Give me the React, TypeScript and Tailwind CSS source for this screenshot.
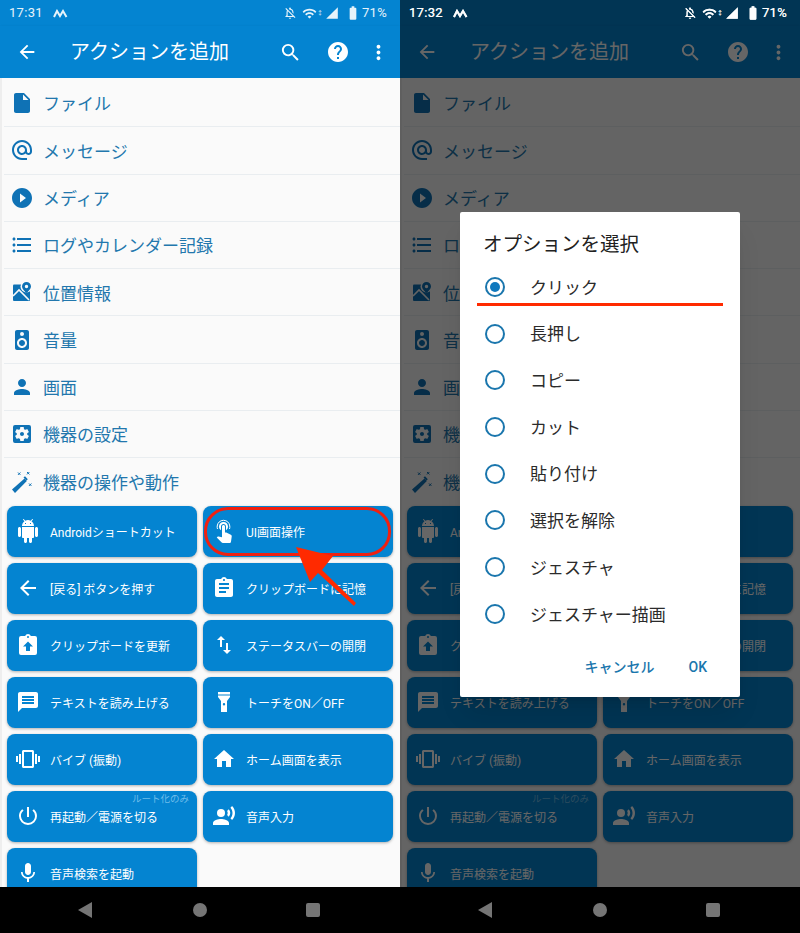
import type { ReactNode } from "react";
import {
  MdAlternateEmail,
  MdArrowBack,
  MdAssignment,
  MdBatteryFull,
  MdFormatListBulleted,
  MdHelp,
  MdHome,
  MdInsertDriveFile,
  MdMessage,
  MdMic,
  MdMoreVert,
  MdOutlineNotificationsOff,
  MdPerson,
  MdPlayCircleFilled,
  MdPowerSettingsNew,
  MdRecordVoiceOver,
  MdSearch,
  MdSettingsApplications,
  MdSignalCellular4Bar,
  MdSpeaker,
  MdSwapVert,
  MdVibration,
  MdWifi,
} from "react-icons/md";

const font = "font-['Roboto','Noto_Sans_CJK_JP',sans-serif]";

function MapPinIcon({ size = 24 }: { size?: number }) {
  return (
    <svg width={size} height={size} viewBox="0 0 24 24" fill="currentColor">
      <rect x="3" y="4.500" width="17" height="16.500" rx="1" />
      <path d="M3 16l6-6 10 10" fill="none" stroke="#fafafa" strokeWidth="1.600" />
      <circle cx="16.500" cy="6.500" r="6" fill="#fafafa" />
      <path d="M16.500 2a4.500 4.500 0 0 0-4.500 4.500c0 2.800 4.500 6.500 4.500 6.500s4.500-3.700 4.500-6.500A4.500 4.500 0 0 0 16.500 2zm0 6.200a1.700 1.700 0 1 1 0-3.400 1.700 1.700 0 0 1 0 3.400z" />
    </svg>
  );
}

function WandIcon({ size = 24 }: { size?: number }) {
  return (
    <svg width={size} height={size} viewBox="0 0 24 24" fill="currentColor">
      <path d="M2 19.500 14.500 8.500l2.300 2.500L5 23z" />
      <path d="M13.500 7.500l1.500-1.300 2.800 3-1.400 1.300z" />
      <g stroke="currentColor" strokeWidth="1" fill="none">
        <path d="M8 2.500l2.400 2.400M10.400 2.500 8 4.900" />
        <path d="M17 2l2.400 2.400M19.400 2 17 4.400" />
        <path d="M19 13.500l2.400 2.400M21.400 13.500 19 15.900" />
      </g>
    </svg>
  );
}

function ClipboardUpIcon({ size = 24 }: { size?: number }) {
  return (
    <svg width={size} height={size} viewBox="0 0 24 24" fill="currentColor">
      <path d="M19 3h-4.200C14.400 1.800 13.300 1 12 1s-2.400.8-2.800 2H5a2 2 0 0 0-2 2v15a2 2 0 0 0 2 2h14a2 2 0 0 0 2-2V5a2 2 0 0 0-2-2zm-7 0a1 1 0 1 1 0 2 1 1 0 0 1 0-2zm0 5.500 5 5h-3V18h-4v-4.500H7z" />
    </svg>
  );
}

function AndroidIcon({ size = 24 }: { size?: number }) {
  return (
    <svg width={size} height={size} viewBox="0 0 24 24" fill="currentColor">
      <path d="M6 18c0 .55.45 1 1 1h1v3.500c0 .83.67 1.500 1.500 1.500s1.500-.67 1.500-1.500V19h2v3.500c0 .83.67 1.500 1.500 1.500s1.500-.67 1.500-1.500V19h1c.55 0 1-.45 1-1V8H6v10zM3.500 8C2.670 8 2 8.670 2 9.500v7c0 .83.67 1.500 1.500 1.500S5 17.330 5 16.500v-7C5 8.670 4.330 8 3.500 8zm17 0c-.83 0-1.500.67-1.500 1.500v7c0 .83.67 1.500 1.500 1.500s1.500-.67 1.500-1.500v-7c0-.83-.67-1.500-1.500-1.500zm-4.970-5.840l1.300-1.300c.2-.2.2-.51 0-.71-.2-.2-.51-.2-.71 0l-1.480 1.480C13.850 1.230 12.950 1 12 1c-.96 0-1.860.23-2.660.63L7.850.15c-.2-.2-.51-.2-.71 0-.2.2-.2.51 0 .71l1.310 1.310C6.970 3.260 6 5.010 6 7h12c0-1.990-.97-3.750-2.470-4.840zM10 5H9V4h1v1zm5 0h-1V4h1v1z" />
    </svg>
  );
}

function TouchRingsIcon({ size = 24 }: { size?: number }) {
  return (
    <svg width={size} height={size} viewBox="0 0 24 24" fill="currentColor">
      <path d="M9 11.240V7.500C9 6.120 10.120 5 11.500 5S14 6.120 14 7.500v3.740c1.210-.81 2-2.180 2-3.740C16 5.010 13.990 3 11.500 3S7 5.010 7 7.500c0 1.560.79 2.930 2 3.740zm9.840 4.630l-4.540-2.260c-.17-.07-.35-.11-.54-.11H13v-6c0-.83-.67-1.500-1.500-1.500S10 6.670 10 7.500v10.740l-3.430-.72c-.08-.01-.15-.03-.24-.03-.31 0-.59.13-.79.33l-.79.8 4.940 4.940c.27.27.65.44 1.060.44h6.790c.75 0 1.330-.55 1.440-1.280l.75-5.270c.01-.07.02-.14.02-.2 0-.62-.38-1.160-.91-1.380z" />
      <path d="M5.500 10a7 7 0 0 1-.3-3c.3-3.300 3-5.700 6.300-5.700s6 2.400 6.300 5.700a7 7 0 0 1-.3 3" fill="none" stroke="currentColor" strokeWidth="1" />
    </svg>
  );
}

function TorchIcon({ size = 24 }: { size?: number }) {
  return (
    <svg width={size} height={size} viewBox="0 0 24 24" fill="currentColor">
      <path d="M6 2h12v2.500H6z" />
      <path
        fillRule="evenodd"
        d="M6 5.500h12V7l-3 4v11H9V11L6 7zM12 13a1.200 1.200 0 1 0 0 2.400 1.200 1.200 0 0 0 0-2.400z"
      />
    </svg>
  );
}

const listItems: { label: string; icon: ReactNode }[] = [
  { label: "ファイル", icon: <MdInsertDriveFile size={24} /> },
  { label: "メッセージ", icon: <MdAlternateEmail size={24} /> },
  { label: "メディア", icon: <MdPlayCircleFilled size={24} /> },
  { label: "ログやカレンダー記録", icon: <MdFormatListBulleted size={24} /> },
  { label: "位置情報", icon: <MapPinIcon /> },
  { label: "音量", icon: <MdSpeaker size={24} /> },
  { label: "画面", icon: <MdPerson size={24} /> },
  { label: "機器の設定", icon: <MdSettingsApplications size={24} /> },
  { label: "機器の操作や動作", icon: <WandIcon /> },
];

const actions: { label: string; icon: ReactNode; note?: string }[] = [
  { label: "Androidショートカット", icon: <AndroidIcon /> },
  { label: "UI画面操作", icon: <TouchRingsIcon /> },
  { label: "[戻る] ボタンを押す", icon: <MdArrowBack size={24} /> },
  { label: "クリップボードに記憶", icon: <MdAssignment size={24} /> },
  { label: "クリップボードを更新", icon: <ClipboardUpIcon /> },
  { label: "ステータスバーの開閉", icon: <MdSwapVert size={24} /> },
  { label: "テキストを読み上げる", icon: <MdMessage size={24} /> },
  { label: "トーチをON／OFF", icon: <TorchIcon /> },
  { label: "バイブ (振動)", icon: <MdVibration size={24} /> },
  { label: "ホーム画面を表示", icon: <MdHome size={24} /> },
  { label: "再起動／電源を切る", icon: <MdPowerSettingsNew size={24} />, note: "ルート化のみ" },
  { label: "音声入力", icon: <MdRecordVoiceOver size={24} /> },
  { label: "音声検索を起動", icon: <MdMic size={24} /> },
];

const options = ["クリック", "長押し", "コピー", "カット", "貼り付け", "選択を解除", "ジェスチャ", "ジェスチャー描画"];

function StatusBar({ time }: { time: string }) {
  return (
    <div className="relative z-10 flex h-[26px] items-center pl-[9px] pr-[13px] text-[13px] tracking-[0.3px] text-white/90">
      <span className="w-[44px]">{time}</span>
      <svg width="15" height="9" viewBox="0 0 15 9">
        <path d="M1 8 4 2l3 5 3-5 3.500 6" fill="none" stroke="currentColor" strokeWidth="2" />
      </svg>
      <div className="ml-auto flex items-center">
        <MdOutlineNotificationsOff size={14} />
        <MdWifi size={15} className="ml-[5px]" />
        <span className="w-[5px] text-[6px] leading-none">↕</span>
        <MdSignalCellular4Bar size={14} className="ml-[3px]" />
        <MdBatteryFull size={16} className="ml-[6px]" />
        <span className="ml-[1px]">71%</span>
      </div>
    </div>
  );
}

function Toolbar() {
  return (
    <div className="flex h-[52px] items-center text-white shadow-sm">
      <MdArrowBack size={22} className="ml-[16px]" />
      <span className="ml-[32px] text-[20px]">アクションを追加</span>
      <MdSearch size={23} className="ml-auto mr-[24px]" />
      <MdHelp size={24} className="mr-[17px]" />
      <MdMoreVert size={23} className="mr-[10px]" />
    </div>
  );
}

function Screen({ time, dim, children }: { time: string; dim?: boolean; children?: ReactNode }) {
  return (
    <div className="relative flex h-[933px] w-[400px] flex-col overflow-hidden">
      <div className="bg-[#0484d1]">
        <StatusBar time={time} />
        <Toolbar />
      </div>

      {/* 一覧 */}
      <div className="flex-1 overflow-hidden border-l-2 border-[#eeeeee] bg-[#fafafa] pt-[2px]">
        {listItems.map((item, index) => (
          <div
            key={item.label}
            className={`ml-[2px] flex h-[47.3px] items-center ${index < 8 ? "border-b border-[#e9edf0]" : ""}`}
          >
            <span className="ml-[6px] flex w-[24px] justify-center text-[#0f72b5]">{item.icon}</span>
            <span className="ml-[9px] pt-[4px] text-[17px] text-[#2277ad]">{item.label}</span>
          </div>
        ))}
        <div className="-ml-[2px] grid grid-cols-[190px_190px] gap-[6px] px-[7px]">
          {actions.map((action) => (
            <div
              key={action.label}
              className="relative flex h-[51px] items-center rounded-[8px] bg-[#0484d1] text-white shadow-[0_1px_3px_rgba(0,0,0,0.3)]"
            >
              <span className="ml-[9px] flex w-[24px] justify-center">{action.icon}</span>
              <span className="ml-[10px] pt-[3px] text-[12px]">{action.label}</span>
              {action.note && (
                <span className="absolute right-[8px] top-0 text-[9.500px] leading-[15px] text-[#6fbdea]">
                  {action.note}
                </span>
              )}
            </div>
          ))}
        </div>
      </div>

      {/* ナビゲーションバー */}
      <div className="relative z-10 flex h-[46px] items-center bg-black">
        <svg width="14" height="16" viewBox="0 0 14 16" className="ml-[78px]">
          <path d="M14 0v16L0 8z" fill="#757575" />
        </svg>
        <span className="ml-[101px] h-[14px] w-[14px] rounded-full bg-[#757575]" />
        <span className="ml-[99px] h-[14px] w-[14px] rounded-[2px] bg-[#757575]" />
      </div>

      {dim && <div className="absolute inset-0 bg-black/60" />}
      {dim && (
        <div className="absolute inset-x-0 top-0 z-10">
          <StatusBar time={time} />
        </div>
      )}
      {children}
    </div>
  );
}

function OptionDialog() {
  return (
    <div className="absolute left-[60px] top-[212px] z-20 w-[280px] rounded-[2px] bg-white shadow-xl">
      <div className="flex h-[51.6px] items-center pl-[23px] pt-[14px] text-[19.500px] text-[#212121]">
        オプションを選択
      </div>
      {options.map((option, index) => (
        <div key={option} className="relative flex h-[46.7px] items-center pl-[25px]">
          <span className="flex h-[20px] w-[20px] items-center justify-center rounded-full border-2 border-[#1a76ad]">
            {index === 0 && <span className="h-[10px] w-[10px] rounded-full bg-[#0f78bd]" />}
          </span>
          <span className="ml-[25px] pt-[3px] text-[17px] text-[#2b2b2b]">{option}</span>
          {index === 0 && (
            <span className="absolute left-[17px] top-[39px] h-[3px] w-[246px] bg-[#ff2a00]" />
          )}
        </div>
      ))}
      <div className="flex h-[60px] items-center justify-end pr-[33px] text-[14px] font-medium text-[#1a76ad]">
        <span>キャンセル</span>
        <span className="ml-[34px]">OK</span>
      </div>
    </div>
  );
}

function ArrowCallout() {
  return (
    <>
      <div className="absolute left-[204px] top-[507px] z-10 h-[49px] w-[187px] rounded-[24px] border-[3px] border-[#f02010]" />
      <svg width="400" height="933" viewBox="0 0 400 933" className="pointer-events-none absolute left-0 top-0 z-10">
        <path d="M296 547l37 9-11 14 34 33-2 3-36-33-8 9z" fill="#ff2a00" />
      </svg>
    </>
  );
}

export default function App() {
  return (
    <div className={`flex h-[933px] w-[800px] ${font}`}>
      <Screen time="17:31">
        <ArrowCallout />
      </Screen>
      <Screen time="17:32" dim>
        <OptionDialog />
      </Screen>
    </div>
  );
}
